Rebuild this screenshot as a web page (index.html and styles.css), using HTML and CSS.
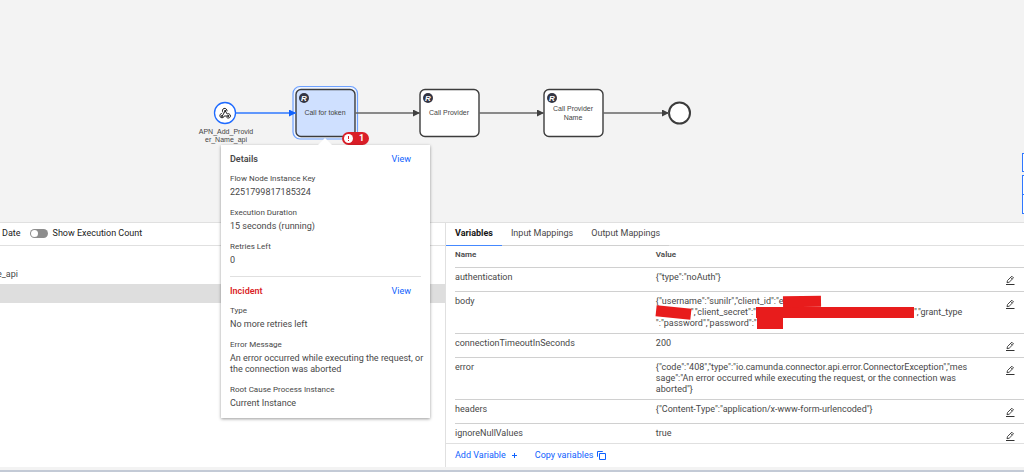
FILE: index.html
```html
<!DOCTYPE html>
<html lang="en">
<head>
    <meta charset="UTF-8">
    <meta name="viewport" content="width=device-width, initial-scale=1.0">
    <title>Process Instance</title>
    <link rel="stylesheet" href="styles.css">
</head>
<body>
    <main class="page">
        <section class="canvas">
            <svg class="diagram" width="1024" height="222">
                <defs>
                    <marker id="arrow" viewBox="0 0 8 8" refX="8" refY="4" markerWidth="7" markerHeight="7" markerUnits="userSpaceOnUse">
                        <path d="M0 0 L8 4 L0 8 Z" fill="#404040"/>
                    </marker>
                    <marker id="arrow-active" viewBox="0 0 8 8" refX="8" refY="4" markerWidth="7" markerHeight="7" markerUnits="userSpaceOnUse">
                        <path d="M0 0 L8 4 L0 8 Z" fill="#0f62fe"/>
                    </marker>
                    <g id="rest">
                        <circle r="5" fill="#333543"/>
                        <text class="rest-letter" y="3">R</text>
                    </g>
                </defs>

                <!-- start event -->
                <circle cx="225" cy="113" r="10.5" fill="#fff" stroke="#1f6bff" stroke-width="1.3"/>
                <g fill="none" stroke="#222" stroke-width="1" stroke-linecap="round">
                    <path d="M222.8 112.2 A2.4 2.4 0 1 1 227.1 110.9 M225.2 110.9 L222.5 115.6"/>
                    <path d="M221.4 113.5 A2.2 2.2 0 1 0 224.2 116 H228"/>
                    <path d="M225.2 110.9 L227.2 114 A2.2 2.2 0 1 1 226.5 117.2"/>
                </g>
                <g fill="#222">
                    <circle cx="225.2" cy="110.9" r="1"/>
                    <circle cx="222" cy="115.9" r="1"/>
                    <circle cx="228.3" cy="115.9" r="1"/>
                </g>
                <text class="node-label" x="226" y="134">APN_Add_Provid</text>
                <text class="node-label" x="226" y="142">er_Name_api</text>

                <!-- tasks -->
                <rect x="293" y="86.5" width="64.5" height="52.5" rx="7" fill="#edf3ff" stroke="#6ea1ff" stroke-width="1.2"/>
                <rect class="task selected" x="296" y="89.5" width="59" height="47" rx="5"/>
                <use href="#rest" x="304" y="98"/>
                <text class="node-label" x="325" y="115">Call for token</text>

                <rect class="task" x="420" y="89.5" width="59" height="47" rx="5"/>
                <use href="#rest" x="428" y="98"/>
                <text class="node-label" x="449" y="115">Call Provider</text>

                <rect class="task" x="544" y="89.5" width="59" height="47" rx="5"/>
                <use href="#rest" x="552" y="98"/>
                <text class="node-label" x="573" y="111">Call Provider</text>
                <text class="node-label" x="573" y="120">Name</text>

                <!-- end event -->
                <circle cx="679.5" cy="113" r="10.5" fill="#fff" stroke="#3c3c3c" stroke-width="2"/>

                <!-- flows -->
                <path class="flow active" d="M236 113 H296" marker-end="url(#arrow-active)"/>
                <path class="flow" d="M355 113 H420" marker-end="url(#arrow)"/>
                <path class="flow" d="M479 113 H544" marker-end="url(#arrow)"/>
                <path class="flow" d="M603 113 H669" marker-end="url(#arrow)"/>
            </svg>
            <div class="incident-badge">
                <svg width="9" height="9" viewBox="0 0 9 9">
                    <circle cx="4.5" cy="4.5" r="4.5" fill="#fff"/>
                    <path d="M4.5 2 V5 M4.5 6 V7" stroke="#da1e28" stroke-width="1"/>
                </svg>
                1
            </div>
            <div class="zoom-controls">
                <button class="reset" aria-label="Reset viewport"></button>
                <button aria-label="Zoom in"></button>
                <button aria-label="Zoom out"></button>
            </div>
        </section>

        <div class="panels">
            <section class="history">
                <header class="panel-header">
                    <span>Date</span>
                    <label class="toggle"><input type="checkbox">Show Execution Count</label>
                </header>
                <ul class="tree">
                    <li><span class="prefix">e</span>_api</li>
                    <li class="current"></li>
                </ul>
            </section>

            <section class="variables">
                <nav class="tabs">
                    <button class="tab active">Variables</button>
                    <button class="tab">Input Mappings</button>
                    <button class="tab">Output Mappings</button>
                </nav>
                <div class="table-wrap">
                    <table>
                        <thead>
                            <tr><th class="name">Name</th><th>Value</th><th class="action"></th></tr>
                        </thead>
                        <tbody>
                            <tr>
                                <td>authentication</td>
                                <td>{"type":"noAuth"}</td>
                                <td><button class="edit" aria-label="Edit authentication"><svg viewBox="0 0 10 10"><use href="#pencil"/></svg></button></td>
                            </tr>
                            <tr>
                                <td>body</td>
                                <td>{"username":"sunilr","client_id":"e<span class="redacted id"></span><br><span class="redacted id-rest"></span>","client_secret":"<span class="redacted secret"></span>","grant_type<br>":"password","password":"<span class="redacted password"></span></td>
                                <td><button class="edit" aria-label="Edit body"><svg viewBox="0 0 10 10"><use href="#pencil"/></svg></button></td>
                            </tr>
                            <tr>
                                <td>connectionTimeoutInSeconds</td>
                                <td>200</td>
                                <td><button class="edit" aria-label="Edit connectionTimeoutInSeconds"><svg viewBox="0 0 10 10"><use href="#pencil"/></svg></button></td>
                            </tr>
                            <tr>
                                <td>error</td>
                                <td>{"code":"408","type":"io.camunda.connector.api.error.ConnectorException","mes<br>sage":"An error occurred while executing the request, or the connection was<br>aborted"}</td>
                                <td><button class="edit" aria-label="Edit error"><svg viewBox="0 0 10 10"><use href="#pencil"/></svg></button></td>
                            </tr>
                            <tr>
                                <td>headers</td>
                                <td>{"Content-Type":"application/x-www-form-urlencoded"}</td>
                                <td><button class="edit" aria-label="Edit headers"><svg viewBox="0 0 10 10"><use href="#pencil"/></svg></button></td>
                            </tr>
                            <tr>
                                <td>ignoreNullValues</td>
                                <td>true</td>
                                <td><button class="edit" aria-label="Edit ignoreNullValues"><svg viewBox="0 0 10 10"><use href="#pencil"/></svg></button></td>
                            </tr>
                        </tbody>
                    </table>
                </div>
                <footer class="actions">
                    <button>Add Variable
                        <svg width="9" height="9" viewBox="0 0 9 9"><path d="M4.5 2 V7 M2 4.5 H7"/></svg>
                    </button>
                    <button>Copy variables
                        <svg width="9" height="9" viewBox="0 0 9 9"><path d="M2.5 2.5 H8.5 V8.5 H2.5 Z M1 5.5 H.5 V.5 H5.5 V1"/></svg>
                    </button>
                </footer>
            </section>
        </div>

        <div class="bottom-bar"></div>

        <aside class="popover">
            <div class="popover-head">
                <h2>Details</h2>
                <a href="#details">View</a>
            </div>
            <dl>
                <dt>Flow Node Instance Key</dt>
                <dd>2251799817185324</dd>
                <dt>Execution Duration</dt>
                <dd>15 seconds (running)</dd>
                <dt>Retries Left</dt>
                <dd>0</dd>
            </dl>
            <hr>
            <div class="popover-head">
                <h2 class="incident">Incident</h2>
                <a href="#incident">View</a>
            </div>
            <dl>
                <dt>Type</dt>
                <dd>No more retries left</dd>
                <dt>Error Message</dt>
                <dd>An error occurred while executing the request, or the connection was aborted</dd>
                <dt>Root Cause Process Instance</dt>
                <dd>Current Instance</dd>
            </dl>
        </aside>
    </main>

    <svg class="sprite" width="0" height="0">
        <symbol id="pencil" viewBox="0 0 10 10">
            <path d="M1 9.5 H9.5" stroke="#333" stroke-width="1"/>
            <path d="M2 7.7 L2.5 5.5 L6.8 1.2 L8.5 2.9 L4.2 7.2 Z M5.6 2.4 L7.3 4.1" fill="none" stroke="#333" stroke-width=".9" stroke-linejoin="round"/>
        </symbol>
    </svg>
</body>
</html>
```
FILE: styles.css
```css
* {
    margin: 0;
    padding: 0;
    box-sizing: border-box;
}

body {
    font-family: Roboto, "Noto Sans", sans-serif;
    font-size: 9px;
    line-height: 11px;
    color: #484848;
    background: #fff;
}

button {
    font: inherit;
    color: inherit;
    background: none;
    border: none;
    cursor: pointer;
}

.page {
    position: relative;
    display: grid;
    grid-template-rows: 47vh minmax(0, 1fr) auto;
    height: 100vh;
    overflow: hidden;
}

/* diagram */
.canvas {
    position: relative;
    overflow: hidden;
    background: #f3f3f3;
}

.diagram {
    display: block;
}

.flow {
    fill: none;
    stroke: #666;
    stroke-width: 1.5;
}

.flow.active {
    stroke: #2f78ff;
}

.task {
    fill: #fff;
    stroke: #3c3c3c;
    stroke-width: 1.4;
}

.task.selected {
    fill: #cfe0ff;
}

.node-label {
    font-family: "Liberation Sans", Arial, sans-serif;
    font-size: 7px;
    text-anchor: middle;
    fill: #444;
}

.rest-letter {
    font-family: "Liberation Sans", Arial, sans-serif;
    font-size: 8px;
    font-weight: bold;
    font-style: italic;
    text-anchor: middle;
    fill: #fff;
}

.incident-badge {
    position: absolute;
    left: 342px;
    top: 132px;
    display: flex;
    align-items: center;
    gap: 6px;
    height: 13px;
    padding: 0 5px 0 2px;
    border-radius: 7px;
    background: #da1e28;
    color: #fff;
    font-weight: 700;
}

.zoom-controls {
    position: absolute;
    right: -17px;
    top: 153px;
    display: flex;
    flex-direction: column;
}

.zoom-controls button {
    width: 19px;
    height: 19px;
    border: 1px solid #2f78ff;
    background: #fff;
}

.zoom-controls button + button {
    height: 20px;
    margin-top: -1px;
}

.zoom-controls .reset + button {
    margin-top: 3px;
}

/* lower panels */
.panels {
    display: grid;
    grid-template-columns: 445fr 579fr;
    border-top: 1px solid #e0e0e0;
}

.history,
.variables {
    display: flex;
    flex-direction: column;
    min-width: 0;
    min-height: 0;
}

.variables {
    border-left: 1px solid #e0e0e0;
}

.panel-header {
    display: flex;
    align-items: center;
    gap: 9px;
    height: 23px;
    padding: 0 2px;
    border-bottom: 1px solid #e0e0e0;
    color: #222;
}

.toggle {
    display: flex;
    align-items: center;
    gap: 5px;
}

.toggle input {
    appearance: none;
    display: flex;
    align-items: center;
    width: 18px;
    height: 9px;
    padding: 1px;
    border-radius: 5px;
    background: #8d8d8d;
}

.toggle input::before {
    content: "";
    width: 7px;
    height: 7px;
    border-radius: 50%;
    background: #fff;
}

.toggle input:checked {
    justify-content: flex-end;
    background: #198038;
}

.tree {
    padding-top: 19px;
    list-style: none;
}

.tree li {
    display: flex;
    align-items: center;
    height: 19px;
}

.tree .prefix {
    margin-left: -3px;
}

.tree .current {
    background: #dedede;
}

.tabs {
    display: flex;
    flex: none;
    height: 23px;
    border-bottom: 1px solid #e0e0e0;
}

.tab {
    height: 23px;
    padding: 0 9px;
    border-bottom: 1px solid #d0d0d0;
}

.tab.active {
    border-bottom-color: #4589ff;
    font-weight: 700;
    color: #161616;
}

.table-wrap {
    flex: 1;
    min-height: 0;
    overflow: hidden;
    padding-left: 9px;
}

table {
    width: 100%;
    border-collapse: separate;
    border-spacing: 0;
    table-layout: fixed;
}

th,
td {
    height: 24px;
    padding: 4px 0;
    border-bottom: 1px solid #d0d0d0;
    text-align: left;
    vertical-align: top;
    white-space: nowrap;
}

th {
    height: 22px;
    padding-top: 3px;
    font-size: 8px;
    font-weight: 600;
}

th.name {
    width: 35.3%;
}

th.action {
    width: 19px;
}

.edit {
    display: block;
    padding-top: 3px;
}

.edit svg {
    display: block;
    width: 10px;
    height: 10px;
}

.redacted {
    display: inline-block;
    height: 11px;
    vertical-align: top;
    background: #e81c1c;
}

.redacted.id {
    width: 38px;
    transform: rotate(-1deg);
}

.redacted.id-rest {
    width: 35px;
    transform: rotate(6deg);
}

.redacted.secret {
    width: 158px;
}

.redacted.password {
    width: 26px;
}

.actions {
    display: flex;
    gap: 16px;
    height: 24px;
    padding-left: 9px;
    border-top: 1px solid #e0e0e0;
    color: #0f62fe;
}

.actions button {
    display: flex;
    align-items: center;
    gap: 4px;
}

.actions path {
    fill: none;
    stroke: currentColor;
}

.bottom-bar {
    height: 5px;
    border-bottom: 2px solid #c3cad6;
    background: #f3f3f3;
}

/* details popover */
.popover {
    position: absolute;
    left: 221px;
    top: 145px;
    width: 209px;
    padding: 8px 3px 9px 9px;
    background: #fff;
    box-shadow: 0 1px 3px rgba(0, 0, 0, 0.4);
}

.popover::before {
    content: "";
    position: absolute;
    left: 97px;
    top: -7px;
    border: 7px solid transparent;
    border-top: none;
    border-bottom-color: #fff;
}

.popover-head {
    display: flex;
    justify-content: space-between;
    padding-right: 16px;
    line-height: 12px;
}

.popover-head h2 {
    font-size: 9px;
    font-weight: 600;
}

.popover-head .incident {
    color: #da1e28;
}

.popover-head a {
    color: #0f62fe;
    text-decoration: none;
}

.popover dt {
    margin-top: 9px;
    font-size: 8px;
    line-height: 10px;
}

.popover dd {
    margin-top: 3px;
}

.popover dd + dt {
    margin-top: 10px;
}

.popover hr {
    margin: 10px 6px 8px 0;
    border: none;
    border-top: 1px solid #e0e0e0;
}

.sprite {
    position: absolute;
}
```
